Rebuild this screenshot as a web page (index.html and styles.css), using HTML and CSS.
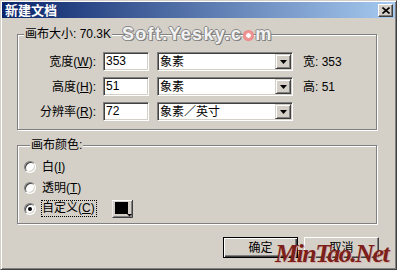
FILE: index.html
```html
<!DOCTYPE html>
<html lang="zh-CN">
<head>
<meta charset="utf-8">
<title>新建文档</title>
<link rel="stylesheet" href="styles.css">
</head>
<body>
<div class="dialog">
  <div class="titlebar">
    <span class="title">新建文档</span>
    <span class="close"><svg width="8" height="7" viewBox="0 0 8 7"><path d="M0.5 0.5L7.5 6.5M7.5 0.5L0.5 6.5" stroke="#000" stroke-width="1.6"/></svg></span>
  </div>
  <div class="body">
    <fieldset class="group size">
      <legend>画布大小: 70.3K</legend>
      <div class="row">
        <span class="lbl">宽度(<u>W</u>):</span>
        <span class="field">353</span>
        <span class="select"><span class="val">象素</span><span class="drop"><svg width="7" height="4" viewBox="0 0 7 4"><path d="M0 0h7L3.5 4z" fill="#000"/></svg></span></span>
        <span class="info">宽: 353</span>
      </div>
      <div class="row">
        <span class="lbl">高度(<u>H</u>):</span>
        <span class="field">51</span>
        <span class="select"><span class="val">象素</span><span class="drop"><svg width="7" height="4" viewBox="0 0 7 4"><path d="M0 0h7L3.5 4z" fill="#000"/></svg></span></span>
        <span class="info">高: 51</span>
      </div>
      <div class="row">
        <span class="lbl">分辨率(<u>R</u>):</span>
        <span class="field">72</span>
        <span class="select"><span class="val">象素／英寸</span><span class="drop"><svg width="7" height="4" viewBox="0 0 7 4"><path d="M0 0h7L3.5 4z" fill="#000"/></svg></span></span>
      </div>
    </fieldset>
    <fieldset class="group color">
      <legend>画布颜色:</legend>
      <div class="rrow"><span class="radio"></span><span class="rlabel">白(<u>I</u>)</span></div>
      <div class="rrow"><span class="radio"></span><span class="rlabel">透明(<u>T</u>)</span></div>
      <div class="rrow"><span class="radio checked"></span><span class="rlabel focus">自定义(<u>C</u>)</span>
        <span class="swatch"><svg width="21" height="18" viewBox="0 0 21 18">
          <rect x="0" y="0" width="21" height="18" fill="#d4d0c8"/>
          <path d="M0 17.5V0.5H20.5" stroke="#fff" fill="none"/>
          <path d="M0.5 17.5H20.5V0" stroke="#404040" fill="none"/>
          <path d="M1.5 16.5H19.5V1" stroke="#808080" fill="none"/>
          <rect x="3" y="2" width="13" height="12" fill="#000"/>
          <path d="M15 14h5l-2.5 2.5z" fill="#000"/>
        </svg></span>
      </div>
    </fieldset>
    <div class="buttons">
      <button class="btn default">确定</button>
      <button class="btn">取消</button>
    </div>
  </div>
  <div class="wm-soft">Soft.Yesky.c<span class="wm-dot"></span>m</div>
  <div class="wm-min">MinTao.Net</div>
</div>
</body>
</html>
```
FILE: styles.css
```css
* { box-sizing: border-box; }
html, body { margin: 0; padding: 0; }
body {
  width: 397px;
  height: 270px;
  overflow: hidden;
  background: #d4d0c8;
  color: #000;
  font: 12px/14px "Liberation Sans", "Noto Sans CJK SC", sans-serif;
}
.dialog {
  position: relative;
  width: 397px;
  height: 270px;
  background: #d4d0c8;
  border: 1px solid;
  border-color: #d4d0c8 #404040 #404040 #d4d0c8;
  box-shadow: inset 1px 1px #fff, inset -1px -1px #808080;
  padding: 1px;
}
.titlebar {
  height: 16px;
  display: flex;
  align-items: center;
  justify-content: space-between;
  padding: 0 2px 0 3px;
  background: linear-gradient(to right, #0a246a, #a6caf0);
}
.title {
  color: #fff;
  font-weight: bold;
  font-size: 13px;
  line-height: 16px;
  font-family: "Noto Sans CJK SC", sans-serif;
}
.close {
  width: 15px;
  height: 13px;
  background: #d4d0c8;
  border: 1px solid;
  border-color: #fff #404040 #404040 #fff;
  box-shadow: inset -1px -1px #808080;
  display: flex;
  align-items: center;
  justify-content: center;
}
.close svg { display: block; }
.body { padding: 9px 18px 0 15px; }
.group {
  margin: 0;
  min-width: 0;
  border: 1px solid #808080;
  box-shadow: 1px 1px 0 #fff, inset 1px 1px 0 #fff;
}
.group legend {
  margin-left: 6px;
  padding: 0 1px;
  background: #d4d0c8;
  line-height: 14px;
}
.size { padding: 11px 0 8px 0; }
.row {
  display: flex;
  align-items: center;
  height: 19px;
}
.row + .row { margin-top: 6px; }
.lbl { width: 78px; text-align: right; }
.field, .select {
  height: 19px;
  background: #fff;
  border: 1px solid;
  border-color: #808080 #fff #fff #808080;
  box-shadow: inset 1px 1px #404040, inset -1px -1px #d4d0c8;
}
.field {
  width: 46px;
  margin-left: 7px;
  padding: 0 2px;
  line-height: 17px;
}
.select {
  width: 136px;
  margin-left: 8px;
  padding: 1px 1px 1px 2px;
  display: flex;
  align-items: center;
  justify-content: space-between;
}
.drop {
  width: 16px;
  height: 15px;
  background: #d4d0c8;
  border: 1px solid;
  border-color: #d4d0c8 #404040 #404040 #d4d0c8;
  box-shadow: inset 1px 1px #fff, inset -1px -1px #808080;
  display: flex;
  align-items: center;
  justify-content: center;
}
.drop svg { display: block; }
.info { margin-left: 10px; }
.color {
  margin-top: 8px;
  padding: 4px 0 4px 6px;
}
.rrow {
  display: flex;
  align-items: center;
  height: 21px;
}
.radio {
  position: relative;
  width: 12px;
  height: 12px;
  margin-right: 6px;
  border-radius: 50%;
  background: #fff;
  border: 1px solid;
  border-color: #808080 #fff #fff #808080;
  box-shadow: inset 1px 1px #404040, inset -1px -1px #d4d0c8;
}
.radio.checked::after {
  content: "";
  position: absolute;
  left: 3px;
  top: 3px;
  width: 4px;
  height: 4px;
  border-radius: 50%;
  background: #000;
}
.focus {
  margin-left: -1px;
  border: 1px dotted #000;
  padding: 0 1px 0 0;
  line-height: 15px;
}
.swatch { margin-left: 15px; height: 18px; }
.swatch svg { display: block; }
.buttons {
  display: flex;
  justify-content: flex-end;
  gap: 6px;
  margin-top: 13px;
  margin-right: -2px;
}
.btn {
  width: 75px;
  height: 21px;
  padding: 0;
  font: inherit;
  color: #000;
  background: #d4d0c8;
  border: 1px solid;
  border-color: #fff #404040 #404040 #fff;
  box-shadow: inset -1px -1px #808080;
}
.btn.default {
  border-color: #000;
  box-shadow: inset 1px 1px #fff, inset -1px -1px #404040, inset -2px -2px #808080;
}
.wm-soft {
  position: absolute;
  left: 121px;
  top: 24px;
  font: bold 18px/18px "Liberation Sans", sans-serif;
  letter-spacing: 1.3px;
  color: #f2f2f2;
  text-shadow: 1px 0 #8a8a8a, -1px 0 #8a8a8a, 0 1px #8a8a8a, 0 -1px #8a8a8a, 1px 1px #6a6a6a;
  white-space: nowrap;
}
.wm-dot {
  display: inline-block;
  width: 11px;
  height: 11px;
  margin: 0 1px;
  border-radius: 50%;
  background: radial-gradient(circle, #fff 0 2px, #f29a9a 2.5px, #e57878);
  vertical-align: -1px;
}
.wm-min {
  position: absolute;
  left: 274px;
  top: 241px;
  font: italic bold 26px/24px "Liberation Serif", serif;
  letter-spacing: -1.5px;
  color: #7d1f1a;
  text-shadow: 1px 1px 0 #d6b0a8;
  white-space: nowrap;
}
```
